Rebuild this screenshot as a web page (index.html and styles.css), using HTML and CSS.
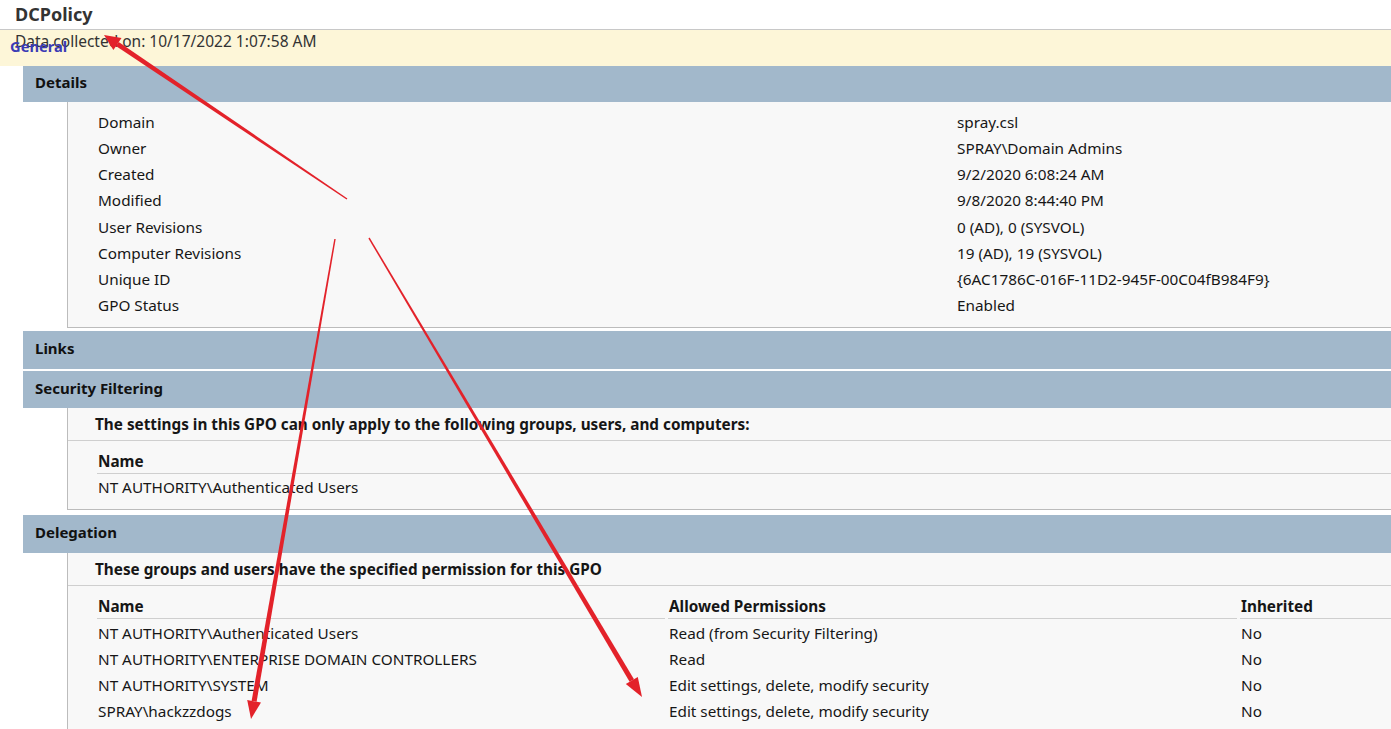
FILE: index.html
```html
<!DOCTYPE html>
<html lang="en">
<head>
<meta charset="utf-8">
<title>DCPolicy</title>
<link rel="stylesheet" href="styles.css">
</head>
<body>
<div class="page">
  <div class="title">DCPolicy</div>
  <div class="collected">Data collected on: 10/17/2022 1:07:58 AM<span class="general">General</span></div>

  <div class="sect-head">Details</div>
  <div class="box details">
    <div class="kv">
      <div>Domain</div><div>spray.csl</div>
      <div>Owner</div><div>SPRAY\Domain Admins</div>
      <div>Created</div><div>9/2/2020 6:08:24 AM</div>
      <div>Modified</div><div>9/8/2020 8:44:40 PM</div>
      <div>User Revisions</div><div>0 (AD), 0 (SYSVOL)</div>
      <div>Computer Revisions</div><div>19 (AD), 19 (SYSVOL)</div>
      <div>Unique ID</div><div>{6AC1786C-016F-11D2-945F-00C04fB984F9}</div>
      <div>GPO Status</div><div>Enabled</div>
    </div>
  </div>

  <div class="sect-head links">Links</div>
  <div class="sect-head sf">Security Filtering</div>
  <div class="box">
    <div class="intro">The settings in this GPO can only apply to the following groups, users, and computers:</div>
    <div class="tbl one">
      <div class="th">Name</div>
      <div class="td">NT AUTHORITY\Authenticated Users</div>
    </div>
  </div>

  <div class="sect-head deleg">Delegation</div>
  <div class="box last">
    <div class="intro">These groups and users have the specified permission for this GPO</div>
    <div class="tbl three">
      <div class="th">Name</div><div class="th">Allowed Permissions</div><div class="th">Inherited</div>
      <div class="td">NT AUTHORITY\Authenticated Users</div><div class="td">Read (from Security Filtering)</div><div class="td">No</div>
      <div class="td">NT AUTHORITY\ENTERPRISE DOMAIN CONTROLLERS</div><div class="td">Read</div><div class="td">No</div>
      <div class="td">NT AUTHORITY\SYSTEM</div><div class="td">Edit settings, delete, modify security</div><div class="td">No</div>
      <div class="td">SPRAY\hackzzdogs</div><div class="td">Edit settings, delete, modify security</div><div class="td">No</div>
    </div>
  </div>

  <svg class="arrows" width="1391" height="729" viewBox="0 0 1391 729" aria-hidden="true">
    <g fill="#e3222a">
      <polygon points="347.4,198.4 118.7,41.9 115.9,46.1 346.6,199.6"/>
      <polygon points="104,35 121.5,38.0 113.4,50.0"/>
      <polygon points="335.7,239.1 334.3,238.9 251.6,700.9 256.6,701.7"/>
      <polygon points="251,719 261.0,702.5 247.2,700.1"/>
      <polygon points="368.4,238.4 369.6,237.6 634.0,679.2 629.6,681.8"/>
      <polygon points="642,697 625.8,684.0 637.8,677.0"/>
    </g>
  </svg>
</div>
</body>
</html>
```

FILE: styles.css
```css
html, body {
  margin: 0;
  padding: 0;
  background: #ffffff;
}
.page {
  position: relative;
  width: 1391px;
  height: 729px;
  overflow: hidden;
  font-family: "Noto Sans", "Open Sans", sans-serif;
  font-size: 15.3px;
  color: #161616;
}
.title {
  height: 29px;
  border-bottom: 1px solid #c8c8c8;
  padding-left: 15px;
  font-size: 18px;
  font-weight: 700;
  line-height: 29px;
  color: #333333;
}
.collected {
  position: relative;
  height: 36px;
  background: #fdf6d8;
  padding-left: 15px;
  line-height: 22px;
  font-size: 15.5px;
  color: #333333;
}
.general {
  position: absolute;
  left: 10px;
  top: 5px;
  font-size: 14.7px;
  font-weight: 700;
  color: #3b3bb5;
}
.sect-head {
  margin-left: 23px;
  height: 32px;
  padding-bottom: 4px;
  background: #a2b8cb;
  padding-left: 12px;
  display: flex;
  align-items: center;
  font-weight: 700;
  font-size: 15px;
  color: #111111;
}
.sect-head.links {
  margin-top: 3px;
  height: 34px;
  border-bottom: 2px solid #ffffff;
}
.sect-head.sf {
  height: 33px;
}
.sect-head.deleg {
  margin-top: 5px;
  height: 34px;
}
.box {
  margin-left: 67px;
  background: #f8f8f8;
  border-left: 1px solid #bcbcbc;
  border-bottom: 1px solid #bcbcbc;
  padding-bottom: 9px;
}
.box.last {
  border-bottom: none;
}
.details {
  padding-top: 7px;
  padding-left: 30px;
}
.kv {
  display: grid;
  grid-template-columns: 859px 1fr;
  grid-auto-rows: 26.15px;
  align-items: center;
}
.intro {
  height: 32px;
  border-bottom: 1px solid #cfcfcf;
  padding-left: 27px;
  display: flex;
  align-items: center;
  font-weight: 700;
}
.tbl {
  display: grid;
  margin-top: 7px;
  margin-left: 29px;
  grid-template-rows: 26px;
  grid-auto-rows: 26.3px;
  align-items: stretch;
}
.tbl.one {
  grid-template-columns: 1fr;
}
.tbl.three {
  grid-template-columns: 568px 569px 1fr;
  column-gap: 3px;
}
.th, .td {
  display: flex;
  align-items: center;
  padding-left: 1px;
}
.th {
  font-weight: 700;
  border-bottom: 1px solid #cfcfcf;
}
.arrows {
  position: absolute;
  left: 0;
  top: 0;
  pointer-events: none;
}
```
